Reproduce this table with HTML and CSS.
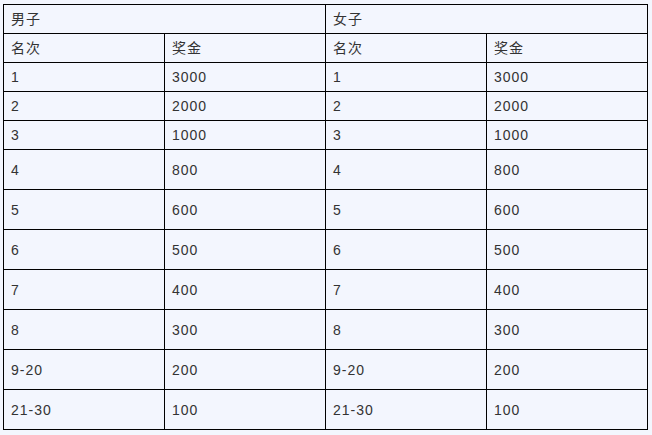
FILE: index.html
```html
<!DOCTYPE html>
<html lang="zh">
<head>
<meta charset="utf-8">
<link rel="stylesheet" href="styles.css">
</head>
<body>
<table class="prize">
<colgroup><col><col><col><col></colgroup>
<tr class="s"><td colspan="2">男子</td><td colspan="2">女子</td></tr>
<tr class="s"><td>名次</td><td>奖金</td><td>名次</td><td>奖金</td></tr>
<tr class="s"><td>1</td><td>3000</td><td>1</td><td>3000</td></tr>
<tr class="s"><td>2</td><td>2000</td><td>2</td><td>2000</td></tr>
<tr class="s"><td>3</td><td>1000</td><td>3</td><td>1000</td></tr>
<tr class="t"><td>4</td><td>800</td><td>4</td><td>800</td></tr>
<tr class="t"><td>5</td><td>600</td><td>5</td><td>600</td></tr>
<tr class="t"><td>6</td><td>500</td><td>6</td><td>500</td></tr>
<tr class="t"><td>7</td><td>400</td><td>7</td><td>400</td></tr>
<tr class="t"><td>8</td><td>300</td><td>8</td><td>300</td></tr>
<tr class="t"><td>9-20</td><td>200</td><td>9-20</td><td>200</td></tr>
<tr class="t"><td>21-30</td><td>100</td><td>21-30</td><td>100</td></tr>
</table>
</body>
</html>
```
FILE: styles.css
```css
html, body {
  margin: 0;
  background: #f3f6fe;
}
body {
  padding: 4px 3px;
  font-family: "Liberation Sans", Arial, "Noto Sans CJK SC", sans-serif;
  font-size: 14px;
  color: #333;
  letter-spacing: 1px;
}
.prize {
  border-collapse: collapse;
  table-layout: fixed;
  width: 645px;
}
.prize col { width: 25%; }
.prize td {
  border: 1px solid #000;
  padding: 0 7px;
  vertical-align: middle;
  line-height: 16px;
}
.prize tr.s td { height: 28px; }
.prize tr.t td { height: 39px; }
```
